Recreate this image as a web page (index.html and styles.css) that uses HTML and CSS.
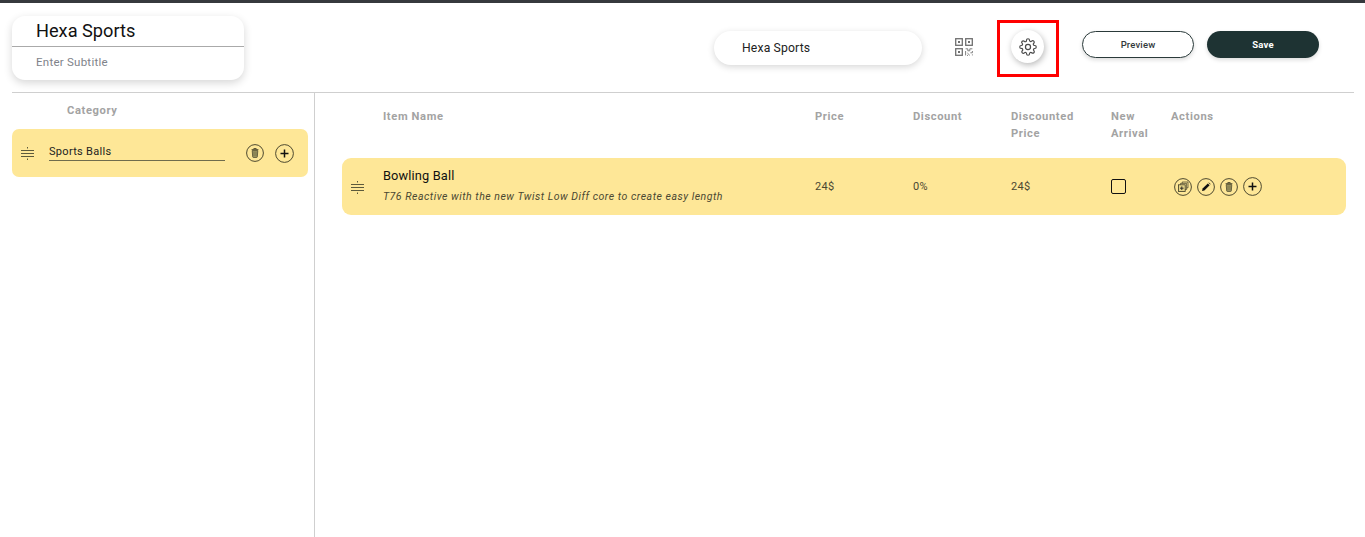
FILE: index.html
```html
<!DOCTYPE html>
<html lang="en">
<head>
<meta charset="utf-8">
<title>Hexa Sports</title>
<link rel="stylesheet" href="styles.css">
</head>
<body>
<svg class="defs" width="0" height="0" aria-hidden="true">
  <symbol id="grip" viewBox="0 0 13 13">
    <path d="M0 3.5h13M0 6.5h13M0 9.5h13" stroke="currentColor" stroke-width="1" fill="none"/>
    <path d="M6.5 0v1.5M6.5 11.5V13" stroke="currentColor" stroke-width="1" fill="none"/>
  </symbol>
  <symbol id="trash" viewBox="0 0 18 18">
    <circle cx="9" cy="9" r="8.4" fill="none" stroke="#3a3824" stroke-width=".9"/>
    <path d="M6.2 6.6h5.6l-.5 6.2q0 .6-.7 .6H7.4q-.7 0-.7-.6z" fill="#a89e66" stroke="#3a3824" stroke-width=".7"/>
    <path d="M5.6 5.6h6.8M7.8 5.4V4.5h2.4v.9" fill="none" stroke="#3a3824" stroke-width=".8"/>
    <path d="M8 7.6v4.6M10 7.6v4.6" stroke="#3a3824" stroke-width=".5"/>
  </symbol>
  <symbol id="plus" viewBox="0 0 19 19">
    <circle cx="9.5" cy="9.5" r="8.9" fill="none" stroke="#3a3824" stroke-width=".9"/>
    <path d="M5.5 9.5h8M9.5 5.5v8" stroke="#111" stroke-width="1.5" fill="none"/>
  </symbol>
  <symbol id="copy" viewBox="0 0 18 18">
    <circle cx="9" cy="9" r="8.4" fill="none" stroke="#3a3824" stroke-width=".9"/>
    <rect x="4.5" y="6.8" width="6.7" height="6.7" fill="#e6d488" stroke="#3a3824" stroke-width=".8"/>
    <path d="M6.5 6.6V5.4h6.1v6.1h-1.3M8.2 5.3V4h5.8v5.8h-1.2" fill="none" stroke="#3a3824" stroke-width=".7"/>
    <path d="M6 10.2h3.6M7.8 8.4V12" stroke="#222" stroke-width=".9"/>
  </symbol>
  <symbol id="pencil" viewBox="0 0 18 18">
    <circle cx="9" cy="9" r="8.4" fill="none" stroke="#3a3824" stroke-width=".9"/>
    <path d="M5 13l.6-2.4 5.2-5.2 1.8 1.8-5.2 5.2z" fill="#111"/>
    <path d="M11.4 4.8l.5-.4 1.7 1.7-.4.5z" fill="#111"/>
  </symbol>
</svg>

<div class="page">
  <header class="topbar">
    <div class="title-card">
      <div class="title-name">Hexa Sports</div>
      <div class="title-sub">Enter Subtitle</div>
    </div>
    <div class="search-pill">Hexa Sports</div>
    <svg class="qr" viewBox="0 0 18 18" aria-hidden="true">
      <g fill="none" stroke="#707070" stroke-width="1.3">
        <rect x=".7" y=".7" width="6.6" height="6.6"/>
        <rect x="10.7" y=".7" width="6.6" height="6.6"/>
        <rect x=".7" y="10.7" width="6.6" height="6.6"/>
      </g>
      <g fill="#707070">
        <rect x="3" y="3" width="2" height="2"/>
        <rect x="13" y="3" width="2" height="2"/>
        <rect x="3" y="13" width="2" height="2"/>
      </g>
      <path d="M10.6 10.8h2.2v2h2v-2h2.6M10.6 13v4.4M12.4 15l2.4 2.4M17.4 13v1.8h-2M13 17.4h-1M17.4 16.4v1" fill="none" stroke="#808080" stroke-width="1"/>
    </svg>
    <div class="gear-box">
      <button class="gear-btn" aria-label="Settings">
        <svg class="gear" viewBox="0 0 24 24" fill="none" stroke="#4a4a4a" stroke-width="1.6" stroke-linecap="round" stroke-linejoin="round">
          <circle cx="12" cy="12" r="3.4"/>
          <path d="M19.4 15a1.65 1.65 0 0 0 .33 1.82l.06.06a2 2 0 1 1-2.83 2.83l-.06-.06a1.65 1.65 0 0 0-2.82 1.17V21a2 2 0 1 1-4 0v-.09a1.65 1.65 0 0 0-2.82-1.17l-.06.06a2 2 0 1 1-2.83-2.83l.06-.06A1.65 1.65 0 0 0 3.09 14H3a2 2 0 1 1 0-4h.09a1.65 1.65 0 0 0 1.17-2.82l-.06-.06a2 2 0 1 1 2.83-2.83l.06.06A1.65 1.65 0 0 0 10 3.09V3a2 2 0 1 1 4 0v.09a1.65 1.65 0 0 0 2.82 1.17l.06-.06a2 2 0 1 1 2.83 2.83l-.06.06A1.65 1.65 0 0 0 20.91 10H21a2 2 0 1 1 0 4h-.09a1.65 1.65 0 0 0-1.51 1z"/>
        </svg>
      </button>
    </div>
    <button class="btn btn-outline">Preview</button>
    <button class="btn btn-dark">Save</button>
  </header>

  <main class="content">
    <aside class="sidebar">
      <div class="cat-head">Category</div>
      <div class="cat-row">
        <svg class="grip"><use href="#grip"/></svg>
        <div class="cat-name">Sports Balls</div>
        <svg class="ico-18"><use href="#trash"/></svg>
        <svg class="ico-19"><use href="#plus"/></svg>
      </div>
    </aside>
    <section class="items">
      <div class="item-grid item-head">
        <div>Item Name</div>
        <div>Price</div>
        <div>Discount</div>
        <div class="head-wrap">Discounted Price</div>
        <div class="head-wrap">New Arrival</div>
        <div>Actions</div>
      </div>
      <div class="item-grid item-row">
        <div class="item-main">
          <svg class="grip item-grip"><use href="#grip"/></svg>
          <div class="item-name">Bowling Ball</div>
          <div class="item-desc">T76 Reactive with the new Twist Low Diff core to create easy length</div>
        </div>
        <div>24$</div>
        <div>0%</div>
        <div>24$</div>
        <div><span class="check"></span></div>
        <div class="actions">
          <svg class="ico-18"><use href="#copy"/></svg>
          <svg class="ico-18"><use href="#pencil"/></svg>
          <svg class="ico-18"><use href="#trash"/></svg>
          <svg class="ico-19"><use href="#plus"/></svg>
        </div>
      </div>
    </section>
  </main>
</div>
</body>
</html>
```
FILE: styles.css
```css
* { box-sizing: border-box; }
html, body { margin: 0; height: 100%; overflow: hidden; }
body {
  background: #fff;
  color: #1c1c1c;
  font-family: Roboto, "Liberation Sans", sans-serif;
}
.defs { position: absolute; }
.page {
  height: 537px;
  border-top: 3px solid #36393d;
  padding: 0 11px 0 12px;
  display: flex;
  flex-direction: column;
}
.topbar {
  height: 90px;
  flex: none;
  display: flex;
  align-items: flex-start;
  border-bottom: 1px solid #cfcfcf;
}
.title-card {
  width: 232px;
  height: 64px;
  margin-top: 13px;
  border-radius: 13px;
  background: #fff;
  box-shadow: 0 3px 8px rgba(0,0,0,.16);
}
.title-name {
  height: 31px;
  padding: 3px 0 0 24px;
  font-size: 18.2px;
  line-height: 24px;
  color: #111;
  border-bottom: 1px solid #aaa;
}
.title-sub {
  padding: 8px 0 0 24px;
  font-size: 11.5px;
  line-height: 15px;
  color: #80838a;
  letter-spacing: .25px;
}
.search-pill {
  width: 208px;
  height: 34px;
  margin: 28px 0 0 470px;
  padding-left: 28px;
  border-radius: 17px;
  background: #fff;
  box-shadow: 0 2px 7px rgba(0,0,0,.16);
  font-size: 12.2px;
  line-height: 34px;
  color: #222;
  letter-spacing: .15px;
}
.qr {
  width: 18px;
  height: 18px;
  margin: 35px 0 0 33px;
  flex: none;
}
.gear-box {
  width: 62px;
  height: 57px;
  margin: 17px 0 0 24px;
  flex: none;
  border: 3px solid #f00;
  display: flex;
  padding: 7px 0 0 11px;
}
.gear-btn {
  width: 33px;
  height: 33px;
  padding: 0;
  border: 0;
  border-radius: 50%;
  background: #fff;
  box-shadow: 1px 2px 6px rgba(0,0,0,.28);
  display: flex;
  align-items: center;
  justify-content: center;
}
.gear { width: 18px; height: 18px; }
.btn {
  width: 112px;
  height: 27px;
  margin-top: 28px;
  padding: 0;
  border-radius: 14px;
  font-family: inherit;
  font-size: 9.5px;
  font-weight: 500;
  letter-spacing: .15px;
  flex: none;
  box-shadow: 0 2px 4px rgba(0,0,0,.14);
}
.btn-outline {
  margin-left: 23px;
  background: #fff;
  color: #33393b;
  border: 1px solid #2a3a3a;
}
.btn-dark {
  margin-left: 13px;
  background: #1e3333;
  color: #fff;
  font-weight: 700;
  border: 0;
}
.content { flex: 1; display: flex; min-height: 0; }
.sidebar {
  width: 303px;
  flex: none;
  padding-right: 6px;
  border-right: 1px solid #cfcfcf;
}
.cat-head {
  padding: 11px 0 0 55px;
  height: 36px;
  font-size: 11.2px;
  line-height: 14px;
  font-weight: 700;
  color: #a3a3a3;
  letter-spacing: .6px;
}
.cat-row {
  height: 48px;
  background: #fee797;
  border-radius: 7px;
  display: flex;
  align-items: center;
  padding: 0 14px 0 9px;
}
.grip { width: 13px; height: 13px; color: #5c5a3c; flex: none; }
.cat-name {
  width: 176px;
  margin: 0 21px 2px 15px;
  height: 18px;
  padding-top: 1px;
  border-bottom: 1px solid #6f6c4c;
  font-size: 11px;
  line-height: 16px;
  color: #222;
  letter-spacing: .3px;
}
.ico-18 { width: 18px; height: 18px; flex: none; }
.ico-19 { width: 19px; height: 19px; flex: none; }
.cat-row .ico-19 { margin-left: 11px; }
.items { flex: 1; padding: 0 8px 0 27px; min-width: 0; }
.item-grid {
  display: grid;
  grid-template-columns: 473px 98px 98px 100px 60px 1fr;
}
.item-head {
  height: 65px;
  padding-top: 15px;
  font-size: 11.2px;
  line-height: 17px;
  font-weight: 700;
  color: #a3a3a3;
  letter-spacing: .6px;
}
.item-head > div:first-child { padding-left: 41px; }
.head-wrap { padding-right: 18px; }
.item-row {
  height: 57px;
  align-items: center;
  background: #fee797;
  border-radius: 9px;
  font-size: 11px;
  letter-spacing: .35px;
  color: #4a4832;
}
.item-main {
  position: relative;
  padding-left: 41px;
  margin-top: -2px;
}
.item-grip { position: absolute; left: 9px; top: 14px; }
.item-name { font-size: 12.8px; line-height: 17px; color: #111; letter-spacing: .15px; margin-bottom: 6px; }
.item-desc { font-size: 10.5px; line-height: 14px; font-style: italic; color: #4a4832; letter-spacing: .52px; }
.check {
  display: block;
  width: 15px;
  height: 15px;
  border: 1.5px solid #111;
  border-radius: 2px;
}
.actions { display: flex; align-items: center; gap: 5px; padding-left: 3px; }
```
